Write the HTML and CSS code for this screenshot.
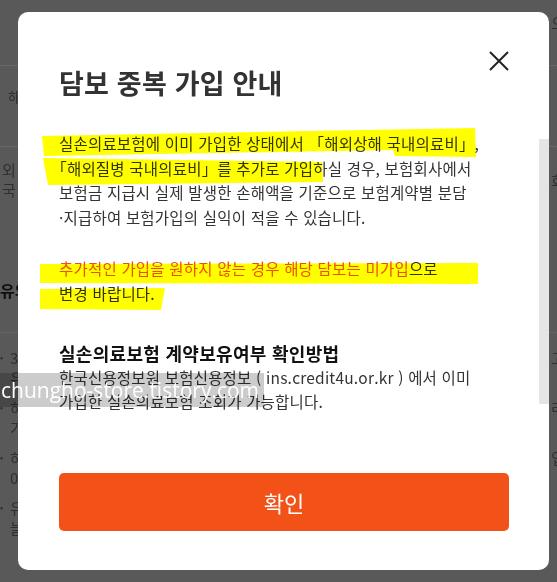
FILE: index.html
```html
<!DOCTYPE html>
<html lang="ko">
<head>
    <meta charset="UTF-8">
    <meta name="viewport" content="width=device-width, initial-scale=1.0">
    <title>담보 중복 가입 안내</title>
    <link rel="stylesheet" href="styles.css">
</head>
<body>

<!-- page behind the dimmed layer -->
<div class="page">
    <div class="row top-row"><span></span><span>오</span></div>
    <div class="divider d1"></div>
    <div class="row r-hae"><span>해</span><span></span></div>
    <div class="divider d2"></div>
    <div class="row r-oe"><span>외</span><span class="late">화</span></div>
    <div class="row r-guk"><span>국</span><span></span></div>
    <div class="row r-notice"><span>유의</span><span></span></div>
    <div class="divider d3"></div>
    <ul class="bullets">
        <li><span class="dot">•</span><div class="txt"><p>3</p><p>유</p></div><span>고</span></li>
        <li><span class="dot">•</span><div class="txt"><p>하</p><p>가</p></div><span>라</span></li>
        <li><span class="dot">•</span><div class="txt"><p>하</p><p>0</p></div><span>업</span></li>
        <li><span class="dot">•</span><div class="txt"><p>유</p><p>늘</p></div><span></span></li>
    </ul>
</div>

<div class="modal">
    <div class="modal-head">
        <h2>담보 중복 가입 안내</h2>
        <button class="close" aria-label="닫기">
            <svg width="20" height="20" viewBox="0 0 20 20">
                <path d="M1 1 L19 19 M19 1 L1 19" stroke="#222" stroke-width="2" fill="none"/>
            </svg>
        </button>
    </div>
    <div class="modal-body">
        <p>실손의료보험에 이미 가입한 상태에서 「해외상해 국내의료비」,<br>「해외질병 국내의료비」를 추가로 가입하실 경우, 보험회사에서<br>보험금 지급시 실제 발생한 손해액을 기준으로 보험계약별 분담<br>·지급하여 보험가입의 실익이 적을 수 있습니다.</p>
        <p><span class="warn">추가적인 가입을 원하지 않는 경우 해당 담보는 미가입</span>으로<br>변경 바랍니다.</p>
        <h3>실손의료보험 계약보유여부 확인방법</h3>
        <p class="tight">한국신용정보원 보험신용정보 ( ins.credit4u.or.kr ) 에서 이미<br>가입한 실손의료보험 조회가 가능합니다.</p>
    </div>
    <div class="modal-foot">
        <button class="ok">확인</button>
    </div>
    <div class="scroll-thumb"></div>
</div>

<!-- marker strokes drawn over the text -->
<svg class="marker" width="557" height="582" viewBox="0 0 557 582">
    <polygon points="42,136 475,128 476,157 395,156 393,150 44,156" fill="#ffff00"/>
    <polygon points="43,158 322,162 323,182 48,185" fill="#ffff00"/>
    <polygon points="40,264 478,263 478,284 40,283" fill="#ffff00"/>
    <polygon points="40,289 165,288 161,310 40,309" fill="#ffff00"/>
</svg>

<div class="watermark">chungho-store.tistory.com</div>

</body>
</html>
```

FILE: styles.css
```css
* {
    box-sizing: border-box;
}
html, body {
    margin: 0;
    padding: 0;
}
body {
    position: relative;
    width: 557px;
    height: 582px;
    overflow: hidden;
    background-color: #595959;
    font-family: "Noto Sans CJK KR", "Noto Sans", sans-serif;
}

/* dimmed page */
.page {
    width: 565px;
    color: #2f2f2f;
    font-size: 15px;
}
.row {
    display: flex;
    justify-content: space-between;
    height: 20px;
    line-height: 20px;
}
.top-row {
    padding-top: 13px;
    height: 33px;
}
.divider {
    height: 1px;
    background-color: #666;
}
.d1 {
    margin-top: 32px;
}
.r-hae {
    margin-top: 21px;
    padding-left: 8px;
}
.d2 {
    margin-top: 39px;
}
.r-oe {
    margin-top: 13px;
    padding-left: 2px;
}
.r-oe .late {
    margin-top: 11px;
}
.r-guk {
    padding-left: 2px;
}
.r-notice {
    margin-top: 80px;
    font-size: 16px;
    font-weight: bold;
    color: #111;
}
.d3 {
    margin-top: 32px;
}
.bullets {
    list-style: none;
    margin: 15px 0 0;
    padding: 0;
}
.bullets li {
    display: flex;
    line-height: 20px;
    margin-bottom: 10px;
}
.bullets .dot {
    width: 10px;
    font-size: 9px;
}
.bullets .txt {
    flex: 1;
}
.bullets p {
    margin: 0;
}

/* modal */
.modal {
    position: absolute;
    left: 18px;
    top: 12px;
    width: 531px;
    height: 558px;
    display: flex;
    flex-direction: column;
    padding: 35px 40px 39px 41px;
    background-color: #fff;
    border-radius: 10px;
}
.modal-head {
    display: flex;
    justify-content: space-between;
    align-items: flex-start;
}
.modal-head h2 {
    margin: 18px 0 0;
    font-size: 27px;
    line-height: 36px;
    letter-spacing: 0.2px;
    font-weight: 700;
    color: #333;
}
.close {
    width: 20px;
    height: 28px;
    padding: 0;
    border: none;
    background: none;
    display: flex;
    align-items: center;
    cursor: pointer;
}
.modal-body {
    flex: 1;
    margin-top: 30px;
    text-spacing-trim: trim-start;
}
.modal-body p {
    margin: 0;
    font-size: 15.5px;
    line-height: 24.5px;
    letter-spacing: 0.2px;
    color: #333;
}
.modal-body p + p {
    margin-top: 27px;
}
.modal-body .warn {
    color: #f04e1b;
}
.modal-body h3 {
    margin: 36px 0 0;
    font-size: 18px;
    line-height: 24px;
    letter-spacing: 0.3px;
    font-weight: 700;
    color: #111;
}
.modal-body p.tight {
    line-height: 24px;
}
.ok {
    width: 100%;
    height: 58px;
    border: none;
    border-radius: 5px;
    background-color: #f25218;
    color: #fff;
    font-family: inherit;
    font-size: 22px;
    cursor: pointer;
}
.scroll-thumb {
    position: absolute;
    right: 0;
    top: 127px;
    width: 10px;
    height: 265px;
    background-color: #e5e5e5;
}

.marker {
    position: absolute;
    left: 0;
    top: 0;
    pointer-events: none;
    mix-blend-mode: multiply;
}
.watermark {
    position: absolute;
    left: 0;
    top: 373px;
    width: 264px;
    height: 34px;
    padding-left: 1px;
    background-color: rgba(0, 0, 0, 0.2);
    color: #fff;
    font-family: "Open Sans", sans-serif;
    font-size: 21px;
    line-height: 34px;
    white-space: nowrap;
    overflow: hidden;
}
```
